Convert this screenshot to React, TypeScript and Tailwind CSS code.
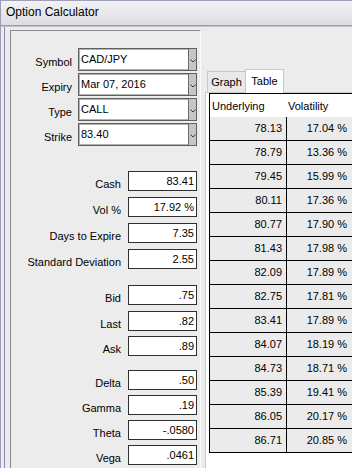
import React from 'react';

// Option calculator window: input form on the left, volatility table on the right

const combos = [
  { label: 'Symbol', value: 'CAD/JPY' },
  { label: 'Expiry', value: 'Mar 07, 2016' },
  { label: 'Type', value: 'CALL' },
  { label: 'Strike', value: '83.40' },
];

// mt = gap above each field, in px
const fields = [
  { label: 'Cash', value: '83.41', mt: 'mt-[25px]' },
  { label: 'Vol %', value: '17.92 %', mt: 'mt-[6px]' },
  { label: 'Days to Expire', value: '7.35', mt: 'mt-[6px]' },
  { label: 'Standard Deviation', value: '2.55', mt: 'mt-[6px]' },
  { label: 'Bid', value: '.75', mt: 'mt-[16px]' },
  { label: 'Last', value: '.82', mt: 'mt-[6px]' },
  { label: 'Ask', value: '.89', mt: 'mt-[5px]' },
  { label: 'Delta', value: '.50', mt: 'mt-[14px]' },
  { label: 'Gamma', value: '.19', mt: 'mt-[5px]' },
  { label: 'Theta', value: '-.0580', mt: 'mt-[5px]' },
  { label: 'Vega', value: '.0461', mt: 'mt-[5px]' },
];

const rows = [
  ['78.13', '17.04 %'],
  ['78.79', '13.36 %'],
  ['79.45', '15.99 %'],
  ['80.11', '17.36 %'],
  ['80.77', '17.90 %'],
  ['81.43', '17.98 %'],
  ['82.09', '17.89 %'],
  ['82.75', '17.81 %'],
  ['83.41', '17.89 %'],
  ['84.07', '18.19 %'],
  ['84.73', '18.71 %'],
  ['85.39', '19.41 %'],
  ['86.05', '20.17 %'],
  ['86.71', '20.85 %'],
];

const Combo: React.FC<{ label: string; value: string; first?: boolean }> = ({ label, value, first }) => (
  <div className={`flex items-center justify-end gap-[6px] ${first ? '' : 'mt-[2px]'}`}>
    <span className="pt-[6px] leading-none">{label}</span>
    <div className="flex h-[23px] w-[119px] border border-[#5f5f5f] bg-white shadow-[inset_0_0_0_1px_#b4b4b4]">
      <span className="flex-1 pl-[2px] leading-[21px]">{value}</span>
      <div className="flex w-[8px] items-center justify-center border-l border-[#6a6a6a] bg-[#c6c6c6] pt-[3px]">
        <svg width="6" height="4" viewBox="0 0 6 4">
          <polyline points="0.5,0.5 3,3 5.5,0.5" fill="none" stroke="#3a3a3a" strokeWidth="1" />
        </svg>
      </div>
    </div>
  </div>
);

const Field: React.FC<{ label: string; value: string; mt: string }> = ({ label, value, mt }) => (
  <div className={`flex items-center justify-end gap-[7px] ${mt}`}>
    <span className="pt-[6px] leading-none">{label}</span>
    <div className="h-[20px] w-[69px] border border-[#2e2e2e] bg-white pr-[2px] text-right leading-[18px]">
      {value}
    </div>
  </div>
);

export default function App() {
  return (
    <div className="flex h-[468px] w-[352px] flex-col overflow-hidden border-l border-[#9c9cb4] bg-[#ececec] font-['Liberation_Sans',Arial,sans-serif] text-[11px] text-black">
      {/* Title bar */}
      <div className="h-[25px] border-t border-[#a09eb8] bg-gradient-to-b from-[#f3f3f6] to-[#dcdce3] pl-[5px] text-[12px] leading-[23px]">
        Option Calculator
      </div>
      <div className="h-px bg-[#9898b2]" />
      <div className="h-px bg-[#c2c2d4]" />

      {/* Body */}
      <div className="flex flex-1">
        <div className="w-[3px]" />
        <div className="w-px bg-[#8888b6]" />
        <div className="w-[5px]" />

        {/* Left form panel */}
        <div className="mt-[3px] flex w-[191px] flex-col border-l border-r border-t border-l-[#8a8a8a] border-r-[#fbfbfb] border-t-[#8a8a8a] pr-[3px] pt-[17px]">
          {combos.map((c, i) => (
            <Combo key={c.label} label={c.label} value={c.value} first={i === 0} />
          ))}
          {fields.map((f) => (
            <Field key={f.label} label={f.label} value={f.value} mt={f.mt} />
          ))}
        </div>

        <div className="w-[4px]" />

        {/* Right tabbed panel */}
        <div className="flex flex-1 flex-col pt-[42px]">
          <div className="flex h-[24px] items-end">
            <div className="h-full w-[2px] border-b border-[#c8c8c8]" />
            <div className="flex h-[22px] w-[38px] items-center justify-center border-b border-l border-t border-[#c8c8c8] bg-[#e9e9e9]">
              Graph
            </div>
            <div className="flex h-[24px] w-[39px] items-center justify-center border-l border-r border-t border-[#c8c8c8] bg-white">
              Table
            </div>
            <div className="h-full flex-1 border-b border-[#c8c8c8]" />
          </div>

          <div className="flex-1 border-l border-[#c8c8c8] bg-white pl-[3px]">
            <div className="border-l border-t border-black">
              <div className="flex h-[23px] items-center bg-white pt-[2px]">
                <div className="w-[76px] pl-[2px]">Underlying</div>
                <div className="flex-1 pl-[2px]">Volatility</div>
              </div>
              {rows.map(([u, v]) => (
                <div key={u} className="flex h-[24px] border-b border-black bg-[#ebebeb] leading-[23px]">
                  <div className="w-[76px] pr-[4px] text-right">{u}</div>
                  <div className="flex-1 border-l border-black pr-[5px] text-right">{v}</div>
                </div>
              ))}
            </div>
          </div>
        </div>
      </div>
    </div>
  );
}
